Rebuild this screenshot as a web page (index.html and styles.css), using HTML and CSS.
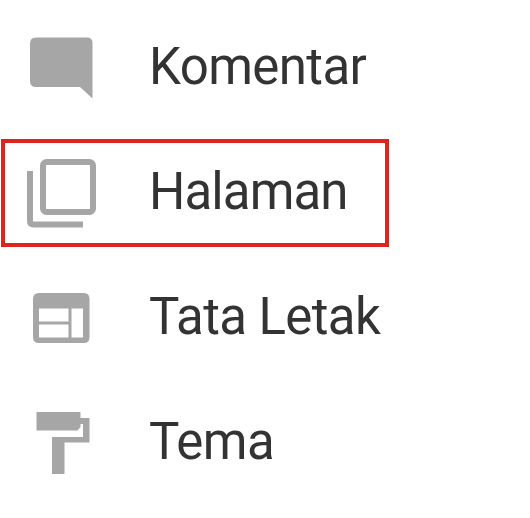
FILE: index.html
```
<!DOCTYPE html>
<html lang="id">
<head>
    <meta charset="UTF-8">
    <meta name="viewport" content="width=device-width, initial-scale=1.0">
    <title>Menu</title>
    <link rel="stylesheet" href="styles.css">
</head>
<body>
    <nav class="menu">
        <a href="#" class="menu-item">
            <svg class="icon" viewBox="0 0 100 100">
                <path d="M36 19.5H87Q92.5 19.5 92.5 25V80.5L80 69H36Q30 69 30 63V25.5Q30 19.5 36 19.5Z"/>
            </svg>
            <span class="label">Komentar</span>
        </a>
        <a href="#" class="menu-item active">
            <svg class="icon" viewBox="0 0 100 100">
                <g class="outline">
                    <rect x="43" y="19" width="50" height="50" rx="3.5"/>
                    <path d="M30 28V78Q30 81.5 33.5 81.5H83"/>
                </g>
            </svg>
            <span class="label">Halaman</span>
        </a>
        <a href="#" class="menu-item">
            <svg class="icon" viewBox="0 0 100 100">
                <path fill-rule="evenodd" d="M39 25H84Q89.5 25 89.5 31V69Q89.5 75 84 75H39Q33 75 33 69V31Q33 25 39 25ZM39 40.5V53.5H68.5V40.5ZM39 56.5V69.5H68.5V56.5ZM71.5 40.5V69.5H83V40.5Z"/>
            </svg>
            <span class="label">Tata Letak</span>
        </a>
        <a href="#" class="menu-item">
            <svg class="icon" viewBox="0 0 100 100">
                <path d="M36.5 19H80.5V25H89.5V49.5H64.5V81H52V44H83V31H80.5V34L77.5 37.5H36.5Z"/>
            </svg>
            <span class="label">Tema</span>
        </a>
    </nav>
</body>
</html>
```

FILE: styles.css
```
body {
    margin: 0;
    background: #fff;
    font-family: Roboto, sans-serif;
}

.menu {
    display: flex;
    flex-direction: column;
    gap: 17px;
    padding-top: 14px;
}

.menu-item {
    display: flex;
    align-items: center;
    box-sizing: border-box;
    width: 389px;
    height: 108px;
    color: #333;
    text-decoration: none;
}

/* Menu yang sedang dipilih */
.menu-item.active {
    width: 388px;
    margin-left: 1px;
    outline: 4px solid #de241e;
    outline-offset: -4px;
}

.menu-item.active .icon {
    margin-left: -1px;
}

.icon {
    flex: none;
    width: 100px;
    height: 100px;
    fill: #a6a6a6;
}

.outline {
    fill: none;
    stroke: #a6a6a6;
    stroke-width: 6;
}

.label {
    margin-left: 49px;
    padding-bottom: 2px;
    font-size: 51px;
    line-height: 56px;
    letter-spacing: -0.6px;
    white-space: nowrap;
}

.menu-item.active .label {
    letter-spacing: -0.9px;
}
```
